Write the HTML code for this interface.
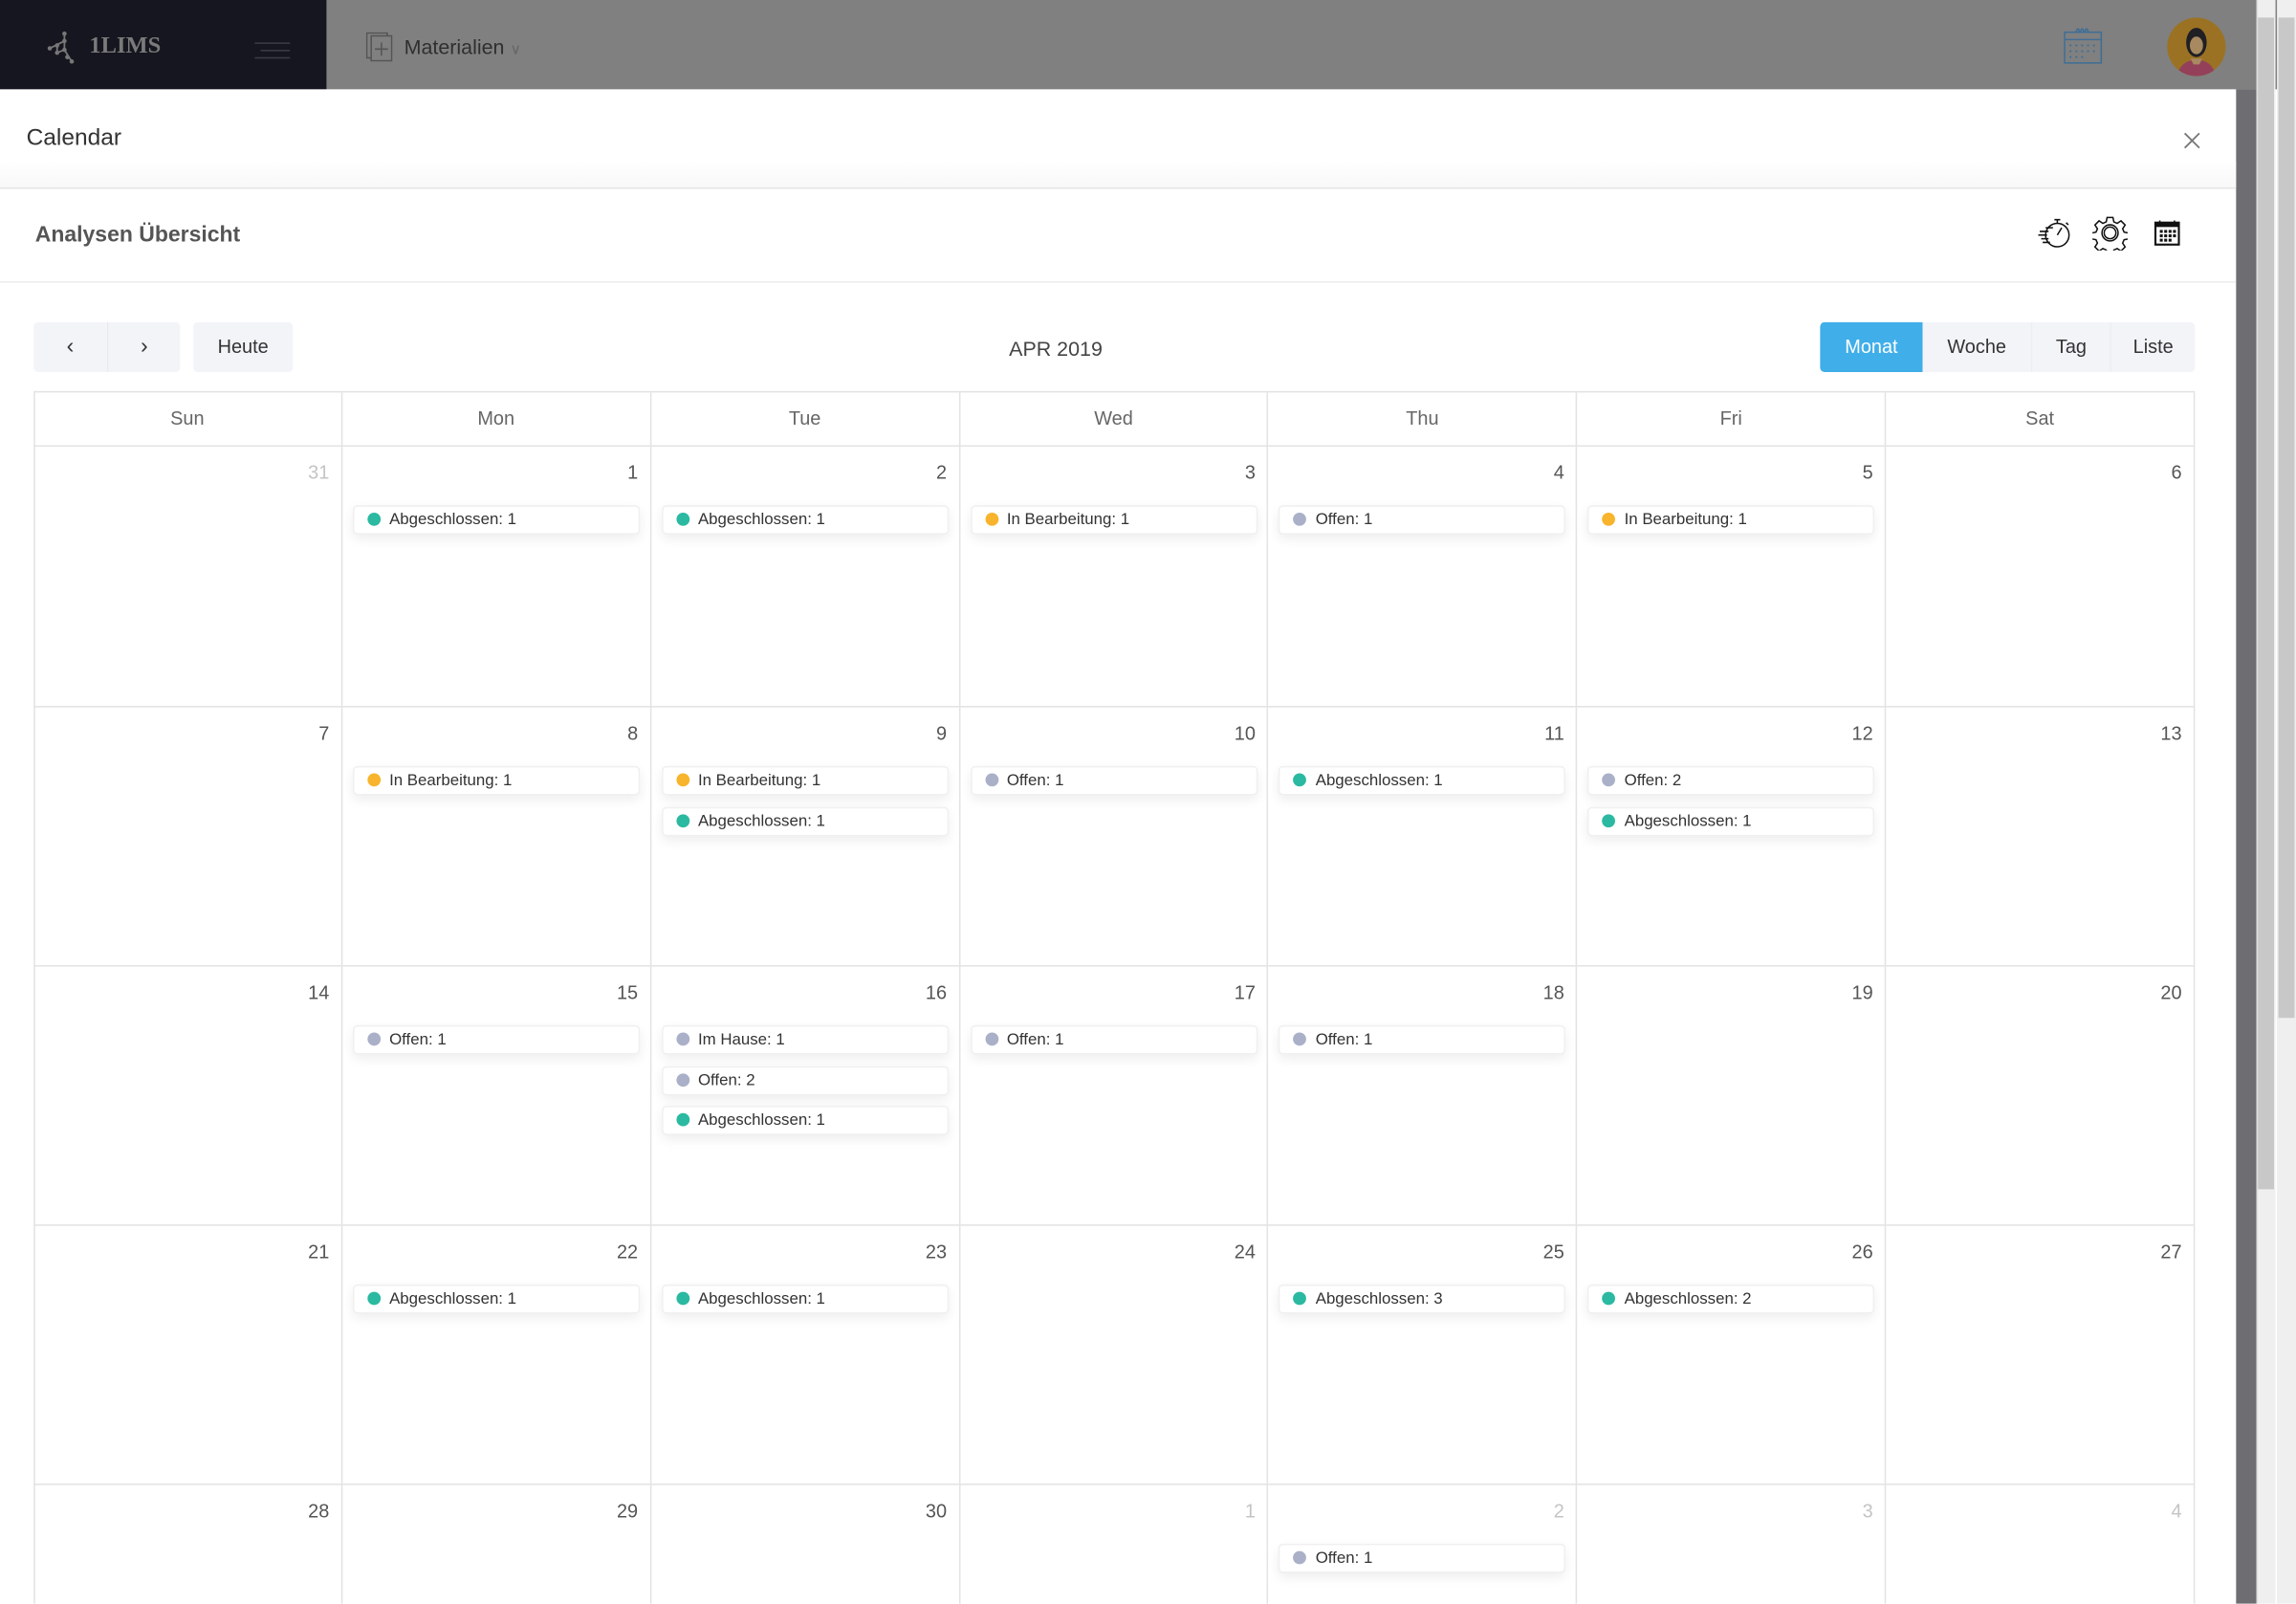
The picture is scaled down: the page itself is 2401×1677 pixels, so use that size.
<!DOCTYPE html>
<html><head><meta charset="utf-8"><style>
*{box-sizing:border-box;margin:0;padding:0}
html,body{width:2401px;height:1677px;overflow:hidden;background:#fff}
#root{position:absolute;left:0;top:0;width:1568px;height:1095px;transform:scale(1.53125);transform-origin:0 0;font-family:"Liberation Sans",sans-serif;color:#333;overflow:hidden}
.abs{position:absolute}
.cell{position:absolute;border-right:1px solid #e3e3e3;border-bottom:1px solid #e3e3e3;overflow:hidden}
.num{position:absolute;right:8px;top:10px;font-size:13px;color:#555}
.num.o{color:#c4c4c4}
.ev{position:absolute;left:7px;width:196px;height:20px;background:#fff;border:1px solid #f0f0f0;border-radius:3px;box-shadow:0 3px 8px rgba(0,0,0,.07);font-size:11px;color:#333;line-height:19px;padding-left:24px}
.ev:before{content:"";position:absolute;left:9px;top:4px;width:9px;height:9px;border-radius:50%;background:var(--c)}
.g{--c:#2bb9a1}.y{--c:#f8b42c}.n{--c:#aab0c8}
.hd{position:absolute;top:268px;height:37px;border-right:1px solid #e3e3e3;border-bottom:1px solid #e3e3e3;text-align:center;line-height:36px;font-size:13px;color:#666}
.btn{position:absolute;top:220px;height:34px;background:#f3f4f8;line-height:34px;text-align:center;font-size:13px;color:#333}
</style></head><body><div id="root">
<div class="abs" style="left:0;top:0;width:223px;height:61px;background:#15161f"></div>
<div class="abs" style="left:223px;top:0;width:1345px;height:61px;background:#808080"></div>
<svg class="abs" style="left:30px;top:20px" width="24" height="24" viewBox="0 0 24 24"><g fill="#777"><circle cx="14" cy="3" r="1.5"/><circle cx="14" cy="8" r="1.5"/><circle cx="9" cy="11" r="1.5"/><circle cx="4" cy="13" r="1.5"/><circle cx="14" cy="14" r="1.5"/><circle cx="9" cy="16" r="1.5"/><circle cx="16" cy="19" r="1.5"/><circle cx="19" cy="22" r="1.5"/></g><path d="M14 3V14L19 22M4 13L14 8M9 11L9 16L14 14" stroke="#777" stroke-width="1.2" fill="none"/></svg>
<div class="abs" style="left:61px;top:23px;font-family:'Liberation Serif',serif;font-weight:bold;font-size:16px;color:#7a7a7a">1LIMS</div>
<div class="abs" style="left:174px;top:29px;width:24px;height:1px;background:#3a3b44"></div>
<div class="abs" style="left:178px;top:34px;width:20px;height:1px;background:#3a3b44"></div>
<div class="abs" style="left:174px;top:39px;width:24px;height:1px;background:#3a3b44"></div>
<svg class="abs" style="left:250px;top:22px" width="18" height="20" viewBox="0 0 18 20"><rect x="0.5" y="0.5" width="14" height="17" fill="none" stroke="#555"/><rect x="3.5" y="2.5" width="14" height="17" fill="#808080" stroke="#555"/><path d="M10.5 7v9M6 11.5h9" stroke="#555"/></svg>
<div class="abs" style="left:276px;top:24px;font-size:14px;color:#2f2f2f">Materialien <span style="font-size:10px;color:#666">&#8744;</span></div>
<svg class="abs" style="left:1409px;top:18px" width="27" height="26" viewBox="0 0 27 26"><rect x="1" y="4" width="25" height="21" fill="none" stroke="#3f6e95" stroke-width="1"/><path d="M1 9h25" stroke="#3f6e95"/><g fill="#3f6e95"><circle cx="5" cy="13" r=".7"/><circle cx="9" cy="13" r=".7"/><circle cx="13" cy="13" r=".7"/><circle cx="17" cy="13" r=".7"/><circle cx="21" cy="13" r=".7"/><circle cx="5" cy="17" r=".7"/><circle cx="9" cy="17" r=".7"/><circle cx="13" cy="17" r=".7"/><circle cx="17" cy="17" r=".7"/><circle cx="21" cy="17" r=".7"/><circle cx="5" cy="21" r=".7"/><circle cx="9" cy="21" r=".7"/><circle cx="13" cy="21" r=".7"/></g><path d="M9 4c0-3 2-3 2 0M12 4c0-3 2-3 2 0M15 4c0-3 2-3 2 0" stroke="#3f6e95" fill="none"/></svg>
<svg class="abs" style="left:1480px;top:12px" width="40" height="40" viewBox="0 0 40 40"><circle cx="20" cy="20" r="20" fill="#9b7223"/><path d="M8 36c3-6 8-7 12-7s9 1 12 7a20 20 0 0 1-24 0z" fill="#94405a"/><ellipse cx="20" cy="17" rx="7" ry="10" fill="#1f1f24"/><ellipse cx="20" cy="19" rx="4.5" ry="6" fill="#a88960"/><path d="M16 28h8l-2 4h-4z" fill="#a88960"/></svg>
<div class="abs" style="left:1527px;top:61px;width:14px;height:1034px;background:#6e6e72"></div>
<div class="abs" style="left:1541px;top:0;width:13px;height:1095px;background:#efefef;border-left:1px solid #ddd"></div>
<div class="abs" style="left:1542px;top:12px;width:11px;height:800px;background:#c8c8c8"></div>
<div class="abs" style="left:1555px;top:0;width:13px;height:1095px;background:#efefef"></div>
<div class="abs" style="left:1556px;top:12px;width:11px;height:683px;background:#c8c8c8"></div>
<div class="abs" style="left:0;top:61px;width:1527px;height:1034px;background:#fff"></div>
<div class="abs" style="left:0;top:110px;width:1527px;height:18px;background:linear-gradient(#fff,#f8f8f9)"></div>
<div class="abs" style="left:0;top:128px;width:1527px;height:1px;background:#e6e6e6"></div>
<div class="abs" style="left:18px;top:86px;font-size:16px;color:#333">Calendar</div>
<svg class="abs" style="left:1491px;top:90px" width="12" height="12" viewBox="0 0 12 12"><path d="M1 1L11 11M11 1L1 11" stroke="#777" stroke-width="1.2"/></svg>
<div class="abs" style="left:24px;top:152px;font-size:15px;font-weight:bold;color:#555">Analysen Übersicht</div>
<div class="abs" style="left:0;top:192px;width:1527px;height:1px;background:#ececec"></div>
<svg class="abs" style="left:1391px;top:147px" width="24" height="24" viewBox="0 0 24 24" fill="none" stroke="#111" stroke-width="1"><circle cx="14" cy="13.5" r="8"/><path d="M12 3h4M14 3v2.5M20 5l1.5 1.5M14 13.5l3-5M2 11h6M1 13.5h6M3 16h5M4 18.5h5M6 8.5h5"/></svg>
<svg class="abs" style="left:1429px;top:147px" width="24" height="24" viewBox="0 0 24 24" fill="none" stroke="#111" stroke-width="1"><path d="M10 1.5h4l.6 3 2.3 1 2.6-1.7 2.8 2.8-1.7 2.6 1 2.3 3 .6v4l-3 .6-1 2.3 1.7 2.6-2.8 2.8-2.6-1.7-2.3 1-.6 3h-4l-.6-3-2.3-1-2.6 1.7-2.8-2.8 1.7-2.6-1-2.3-3-.6v-4l3-.6 1-2.3-1.7-2.6 2.8-2.8 2.6 1.7 2.3-1z"/><circle cx="12" cy="12" r="5.5"/><circle cx="12" cy="12" r="4"/></svg>
<svg class="abs" style="left:1471px;top:150px" width="18" height="18" viewBox="0 0 18 18"><rect x="1" y="2" width="16" height="15" fill="none" stroke="#111" stroke-width="1.4"/><rect x="1" y="2" width="16" height="3" fill="#111"/><path d="M4 0.5v3M14 0.5v3" stroke="#111"/><g fill="#111"><rect x="4" y="7" width="2" height="2"/><rect x="7" y="7" width="2" height="2"/><rect x="10" y="7" width="2" height="2"/><rect x="13" y="7" width="2" height="2"/><rect x="4" y="10" width="2" height="2"/><rect x="7" y="10" width="2" height="2"/><rect x="10" y="10" width="2" height="2"/><rect x="13" y="10" width="2" height="2"/><rect x="4" y="13" width="2" height="2"/><rect x="7" y="13" width="2" height="2"/><rect x="10" y="13" width="2" height="2"/></g></svg>
<div class="btn" style="left:23px;width:50px;border-radius:3px 0 0 3px;font-size:15px">&#8249;</div>
<div class="btn" style="left:73px;width:50px;border-left:1px solid #e8e9ee;border-radius:0 3px 3px 0;font-size:15px">&#8250;</div>
<div class="btn" style="left:132px;width:68px;border-radius:3px">Heute</div>
<div class="abs" style="left:621px;width:200px;top:230px;text-align:center;font-size:14px;color:#444">APR 2019</div>
<div class="btn" style="left:1243px;width:70px;background:#40aee9;color:#fff;border-radius:3px 0 0 3px">Monat</div>
<div class="btn" style="left:1313px;width:74px">Woche</div>
<div class="btn" style="left:1387px;width:54px;border-left:1px solid #eceef2">Tag</div>
<div class="btn" style="left:1441px;width:58px;border-left:1px solid #eceef2;border-radius:0 3px 3px 0">Liste</div>
<div class="abs" style="left:23px;top:267px;width:1476px;height:828px;border-left:1px solid #e3e3e3;border-top:1px solid #e3e3e3"></div>
<div id="cal"></div>
</div>
<script>
var L=23,W=1476/7,days=["Sun","Mon","Tue","Wed","Thu","Fri","Sat"],h="";
for(var i=0;i<7;i++)h+='<div class="hd" style="left:'+(L+i*W)+'px;width:'+W+'px">'+days[i]+'</div>';
var tops=[305,483,660,837,1014],rh=[178,177,177,177,81];
var nums=[[31,1,2,3,4,5,6],[7,8,9,10,11,12,13],[14,15,16,17,18,19,20],[21,22,23,24,25,26,27],[28,29,30,1,2,3,4]];
var A="Abgeschlossen: ",B="In Bearbeitung: ",O="Offen: ";
var ev={"0,1":[["g",A+1]],"0,2":[["g",A+1]],"0,3":[["y",B+1]],"0,4":[["n",O+1]],"0,5":[["y",B+1]],
"1,1":[["y",B+1]],"1,2":[["y",B+1],["g",A+1]],"1,3":[["n",O+1]],"1,4":[["g",A+1]],"1,5":[["n",O+2],["g",A+1]],
"2,1":[["n",O+1]],"2,2":[["n","Im Hause: 1"],["n",O+2],["g",A+1]],"2,3":[["n",O+1]],"2,4":[["n",O+1]],
"3,1":[["g",A+1]],"3,2":[["g",A+1]],"3,4":[["g",A+3]],"3,5":[["g",A+2]],"4,4":[["n",O+1]]};
for(var r=0;r<5;r++)for(var c=0;c<7;c++){
var o=(r==0&&c==0)||(r==4&&c>2);
h+='<div class="cell" style="left:'+(L+c*W)+'px;top:'+tops[r]+'px;width:'+W+'px;height:'+rh[r]+'px;'+(r==4?'border-bottom:none;':'')+'"><div class="num'+(o?' o':'')+'">'+nums[r][c]+'</div>';
var e=ev[r+","+c]||[];
for(var k=0;k<e.length;k++)h+='<div class="ev '+e[k][0]+'" style="top:'+(40+k*27.5)+'px">'+e[k][1]+'</div>';
h+='</div>';}
document.getElementById("cal").innerHTML=h;
</script>
</body></html>
